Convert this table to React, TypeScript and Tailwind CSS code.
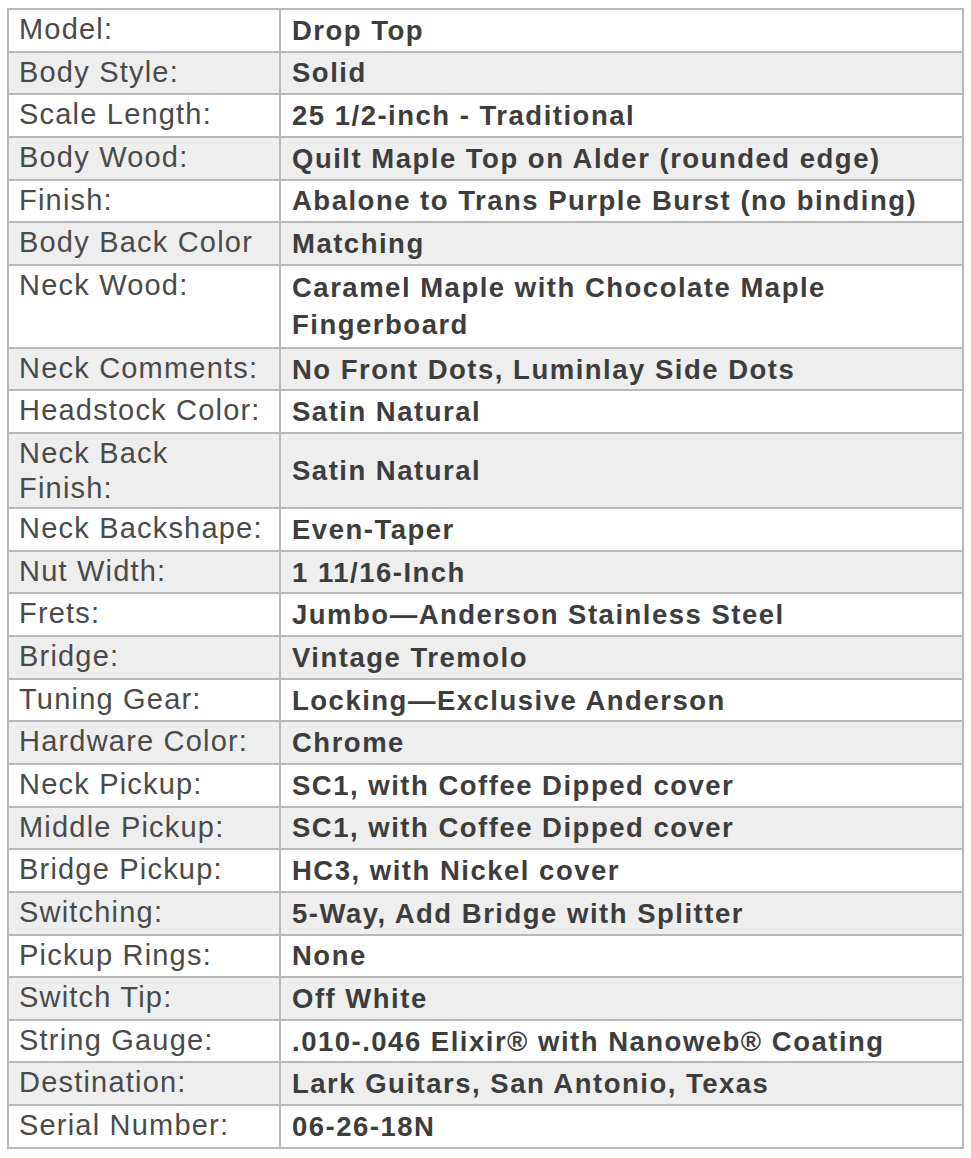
import type React from "react"

type Spec = {
  label: React.ReactNode
  value: React.ReactNode
  height?: string
}

const specs: Spec[] = [
  { label: "Model:", value: "Drop Top" },
  { label: "Body Style:", value: "Solid" },
  { label: "Scale Length:", value: "25 1/2-inch - Traditional" },
  { label: "Body Wood:", value: "Quilt Maple Top on Alder (rounded edge)" },
  { label: "Finish:", value: "Abalone to Trans Purple Burst (no binding)" },
  { label: "Body Back Color", value: "Matching" },
  {
    label: "Neck Wood:",
    value: (
      <>
        Caramel Maple with Chocolate Maple
        <br />
        Fingerboard
      </>
    ),
    height: "h-[83px]",
  },
  { label: "Neck Comments:", value: "No Front Dots, Luminlay Side Dots" },
  { label: "Headstock Color:", value: "Satin Natural" },
  {
    label: (
      <>
        Neck Back
        <br />
        Finish:
      </>
    ),
    value: "Satin Natural",
    height: "h-[75px]",
  },
  { label: "Neck Backshape:", value: "Even-Taper" },
  { label: "Nut Width:", value: "1 11/16-Inch" },
  { label: "Frets:", value: "Jumbo\u2014Anderson Stainless Steel" },
  { label: "Bridge:", value: "Vintage Tremolo" },
  { label: "Tuning Gear:", value: "Locking\u2014Exclusive Anderson" },
  { label: "Hardware Color:", value: "Chrome" },
  { label: "Neck Pickup:", value: "SC1, with Coffee Dipped cover" },
  { label: "Middle Pickup:", value: "SC1, with Coffee Dipped cover" },
  { label: "Bridge Pickup:", value: "HC3, with Nickel cover" },
  { label: "Switching:", value: "5-Way, Add Bridge with Splitter" },
  { label: "Pickup Rings:", value: "None" },
  { label: "Switch Tip:", value: "Off White" },
  { label: "String Gauge:", value: ".010-.046 Elixir\u00ae with Nanoweb\u00ae Coating" },
  { label: "Destination:", value: "Lark Guitars, San Antonio, Texas" },
  { label: "Serial Number:", value: "06-26-18N" },
]

function SpecRow({ spec, shaded }: { spec: Spec; shaded: boolean }) {
  return (
    <div
      className={`grid grid-cols-[272px_1fr] ${spec.height ?? "h-[42.65px]"} ${
        shaded ? "bg-[#eeeeee]" : "bg-white"
      }`}
    >
      <div className="border-r-2 border-b-2 border-[#b9b9b9] pl-[10px] pt-[2px] text-[29px] leading-[34.5px] tracking-[1.2px] text-[#4a4a4a]">
        {spec.label}
      </div>
      <div className="flex items-center border-r-2 border-b-2 border-[#b9b9b9] pl-[11px] text-[27.5px] font-bold leading-[37px] tracking-[1.5px] text-[#3d3d3d]">
        <div>{spec.value}</div>
      </div>
    </div>
  )
}

export default function App() {
  return (
    <div className="min-h-[1158px] bg-white font-['Liberation_Sans',Arial,sans-serif]">
      <div className="ml-[7px] pt-[8px]">
        <div className="w-[957px] border-t-2 border-l-2 border-[#b9b9b9]">
          {specs.map((spec, i) => (
            <SpecRow key={i} spec={spec} shaded={i % 2 === 1} />
          ))}
        </div>
      </div>
    </div>
  )
}
